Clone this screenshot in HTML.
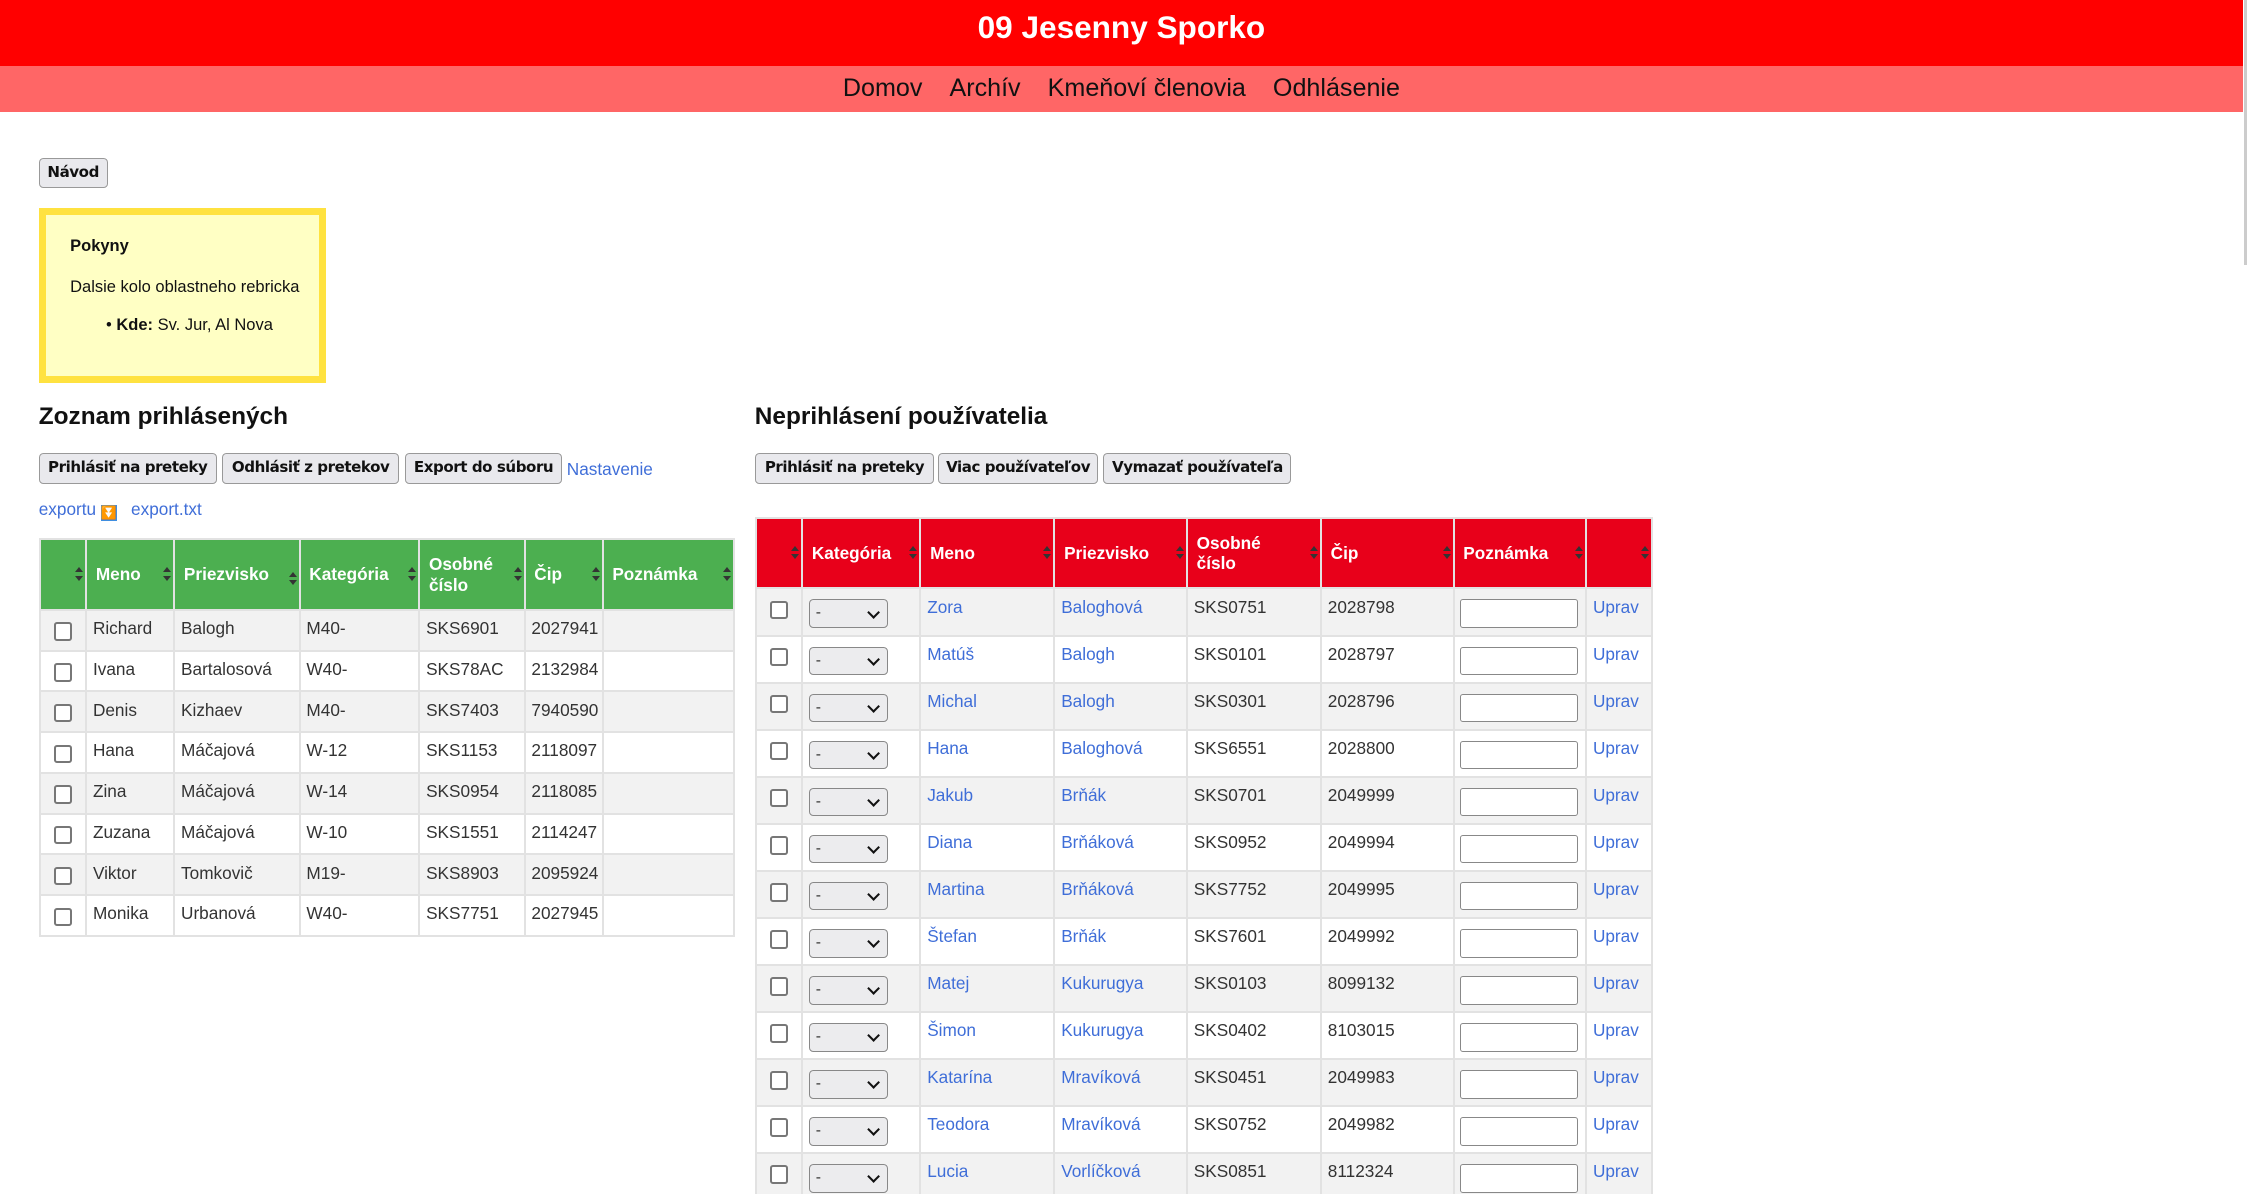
<!DOCTYPE html>
<html><head><meta charset="utf-8">
<style>
html,body{margin:0;padding:0;background:#fff;overflow:hidden}
#w{zoom:1.43495;width:1568px;height:832px;position:relative;font-family:"Liberation Sans",Arial,sans-serif;color:#222}
.hdr{position:absolute;left:0;top:0;width:1563px;height:46px;background:#ff0000;color:#fff;font-weight:bold;font-size:22px;text-align:center;line-height:39px}
.nav{position:absolute;left:0;top:46px;width:1563px;height:32px;background:#ff6666;text-align:center;font-size:17.5px;line-height:31px;color:#111}
.nav span{margin:0 7px}
.sb{position:absolute;left:1564px;top:0;width:2px;height:185px;background:#ccc}
.btn{position:absolute;height:21px;border:1px solid #999;border-radius:3px;background:#e9e9ed;font-family:"DejaVu Sans",sans-serif;font-weight:bold;font-size:10.5px;line-height:19px;box-sizing:border-box;white-space:nowrap;color:#111;letter-spacing:-0.3px;text-align:center;overflow:hidden}
.box{position:absolute;left:27px;top:145px;width:200px;height:122px;box-sizing:border-box;border:5px solid #ffe240;background:#ffffc4;font-size:11.5px;color:#111}
h2{position:absolute;margin:0;font-size:17px;font-weight:bold;color:#111}
a,.l{color:#3f6ed8;text-decoration:none}
table{position:absolute;border-collapse:separate;border-spacing:2px;background:#e2e2e2;font-size:12px;table-layout:fixed}
th{color:#fff;font-weight:bold;text-align:left;padding:0 6px;height:48px;position:relative;line-height:14px}
th i{position:absolute;right:4px;top:50%;margin-top:-5px;width:0;height:0;font-style:normal}
th i:before{content:"";position:absolute;left:-3px;top:0;border:3px solid transparent;border-bottom:4px solid #333;border-top:0}
th i:after{content:"";position:absolute;left:-3px;top:6px;border:3px solid transparent;border-top:4px solid #333;border-bottom:0}
td{vertical-align:top;padding:5px 4px 0;color:#333}
tr:nth-child(odd) td{background:#fff}
tr:nth-child(even) td{background:#f2f2f2}
.g th{background:#4caf50}
.r th{background:#e8001a}
.cb{display:inline-block;width:10px;height:10px;border:1.5px solid #777;border-radius:2px;background:#fff;margin:3px 0 0 5px}
.sel{display:inline-block;width:55px;height:20px;box-sizing:border-box;border:1px solid #888;border-radius:3px;background:#ececee;font-size:11px;line-height:18px;padding-left:4px;position:relative;margin-top:2px}
.sel:after{content:"";position:absolute;right:6px;top:5px;width:5px;height:5px;border-right:1.5px solid #111;border-bottom:1.5px solid #111;transform:rotate(45deg)}
.inp{display:inline-block;width:82px;height:20px;box-sizing:border-box;border:1px solid #888;border-radius:2px;background:#fff;margin-top:2px}
</style></head><body><div id="w">
<div class="hdr">09 Jesenny Sporko</div>
<div class="nav"><span>Domov</span> <span>Archív</span> <span>Kmeňoví členovia</span> <span>Odhlásenie</span></div>
<div class="sb"></div>
<div class="btn" style="left:27px;top:110px;width:48px">Návod</div>
<div class="box">
<div style="position:absolute;left:17px;top:15px;font-weight:bold">Pokyny</div>
<div style="position:absolute;left:17px;top:44px">Dalsie kolo oblastneho rebricka</div>
<div style="position:absolute;left:42px;top:70px">• <b>Kde:</b> Sv. Jur, Al Nova</div>
</div>
<h2 style="left:27px;top:281px">Zoznam prihlásených</h2>
<h2 style="left:526px;top:281px">Neprihlásení používatelia</h2>
<div class="btn" style="left:27px;top:316px;width:124px">Prihlásiť na preteky</div>
<div class="btn" style="left:155px;top:316px;width:123px">Odhlásiť z pretekov</div>
<div class="btn" style="left:282px;top:316px;width:110px">Export do súboru</div>
<span class="l" style="position:absolute;left:395px;top:320px;font-size:12px">Nastavenie</span>
<span class="l" style="position:absolute;left:27px;top:348px;font-size:12px">exportu <span style="display:inline-block;width:11px;height:11px;background:#3f8ee0;color:#fff;font-size:9px;line-height:11px;text-align:center;vertical-align:-1px">⏬</span>&nbsp;&nbsp; export.txt</span>
<div class="btn" style="left:526px;top:316px;width:125px">Prihlásiť na preteky</div>
<div class="btn" style="left:654px;top:316px;width:111px">Viac používateľov</div>
<div class="btn" style="left:769px;top:316px;width:131px">Vymazať používateľa</div>

<table class="g" style="left:27px;top:375px;width:485px">
<colgroup><col style="width:31px"><col style="width:60px"><col style="width:86px"><col style="width:82px"><col style="width:72px"><col style="width:53px"><col></colgroup>
<tr><th><i></i></th><th>Meno<i></i></th><th>Priezvisko<i style="margin-top:-2px"></i></th><th>Kategória<i></i></th><th>Osobné<br>číslo<i></i></th><th>Čip<i></i></th><th>Poznámka<i></i></th></tr>
<tr style="height:27px"><td><span class="cb"></span></td><td>Richard</td><td>Balogh</td><td>M40-</td><td>SKS6901</td><td>2027941</td><td></td></tr>
<tr style="height:27px"><td><span class="cb"></span></td><td>Ivana</td><td>Bartalosová</td><td>W40-</td><td>SKS78AC</td><td>2132984</td><td></td></tr>
<tr style="height:27px"><td><span class="cb"></span></td><td>Denis</td><td>Kizhaev</td><td>M40-</td><td>SKS7403</td><td>7940590</td><td></td></tr>
<tr style="height:27px"><td><span class="cb"></span></td><td>Hana</td><td>Máčajová</td><td>W-12</td><td>SKS1153</td><td>2118097</td><td></td></tr>
<tr style="height:27px"><td><span class="cb"></span></td><td>Zina</td><td>Máčajová</td><td>W-14</td><td>SKS0954</td><td>2118085</td><td></td></tr>
<tr style="height:27px"><td><span class="cb"></span></td><td>Zuzana</td><td>Máčajová</td><td>W-10</td><td>SKS1551</td><td>2114247</td><td></td></tr>
<tr style="height:27px"><td><span class="cb"></span></td><td>Viktor</td><td>Tomkovič</td><td>M19-</td><td>SKS8903</td><td>2095924</td><td></td></tr>
<tr style="height:27px"><td><span class="cb"></span></td><td>Monika</td><td>Urbanová</td><td>W40-</td><td>SKS7751</td><td>2027945</td><td></td></tr>
</table>

<table class="r" style="left:526px;top:360px;width:626px">
<colgroup><col style="width:31px"><col style="width:81px"><col style="width:92px"><col style="width:91px"><col style="width:92px"><col style="width:91px"><col style="width:91px"><col></colgroup>
<tr><th><i></i></th><th>Kategória<i></i></th><th>Meno<i></i></th><th>Priezvisko<i></i></th><th>Osobné<br>číslo<i></i></th><th>Čip<i></i></th><th>Poznámka<i></i></th><th><i></i></th></tr>
<tr style="height:31.4px"><td><span class="cb"></span></td><td><span class="sel">-</span></td><td><a>Zora</a></td><td><a>Baloghová</a></td><td>SKS0751</td><td>2028798</td><td><span class="inp"></span></td><td><a>Uprav</a></td></tr>
<tr style="height:31.4px"><td><span class="cb"></span></td><td><span class="sel">-</span></td><td><a>Matúš</a></td><td><a>Balogh</a></td><td>SKS0101</td><td>2028797</td><td><span class="inp"></span></td><td><a>Uprav</a></td></tr>
<tr style="height:31.4px"><td><span class="cb"></span></td><td><span class="sel">-</span></td><td><a>Michal</a></td><td><a>Balogh</a></td><td>SKS0301</td><td>2028796</td><td><span class="inp"></span></td><td><a>Uprav</a></td></tr>
<tr style="height:31.4px"><td><span class="cb"></span></td><td><span class="sel">-</span></td><td><a>Hana</a></td><td><a>Baloghová</a></td><td>SKS6551</td><td>2028800</td><td><span class="inp"></span></td><td><a>Uprav</a></td></tr>
<tr style="height:31.4px"><td><span class="cb"></span></td><td><span class="sel">-</span></td><td><a>Jakub</a></td><td><a>Brňák</a></td><td>SKS0701</td><td>2049999</td><td><span class="inp"></span></td><td><a>Uprav</a></td></tr>
<tr style="height:31.4px"><td><span class="cb"></span></td><td><span class="sel">-</span></td><td><a>Diana</a></td><td><a>Brňáková</a></td><td>SKS0952</td><td>2049994</td><td><span class="inp"></span></td><td><a>Uprav</a></td></tr>
<tr style="height:31.4px"><td><span class="cb"></span></td><td><span class="sel">-</span></td><td><a>Martina</a></td><td><a>Brňáková</a></td><td>SKS7752</td><td>2049995</td><td><span class="inp"></span></td><td><a>Uprav</a></td></tr>
<tr style="height:31.4px"><td><span class="cb"></span></td><td><span class="sel">-</span></td><td><a>Štefan</a></td><td><a>Brňák</a></td><td>SKS7601</td><td>2049992</td><td><span class="inp"></span></td><td><a>Uprav</a></td></tr>
<tr style="height:31.4px"><td><span class="cb"></span></td><td><span class="sel">-</span></td><td><a>Matej</a></td><td><a>Kukurugya</a></td><td>SKS0103</td><td>8099132</td><td><span class="inp"></span></td><td><a>Uprav</a></td></tr>
<tr style="height:31.4px"><td><span class="cb"></span></td><td><span class="sel">-</span></td><td><a>Šimon</a></td><td><a>Kukurugya</a></td><td>SKS0402</td><td>8103015</td><td><span class="inp"></span></td><td><a>Uprav</a></td></tr>
<tr style="height:31.4px"><td><span class="cb"></span></td><td><span class="sel">-</span></td><td><a>Katarína</a></td><td><a>Mravíková</a></td><td>SKS0451</td><td>2049983</td><td><span class="inp"></span></td><td><a>Uprav</a></td></tr>
<tr style="height:31.4px"><td><span class="cb"></span></td><td><span class="sel">-</span></td><td><a>Teodora</a></td><td><a>Mravíková</a></td><td>SKS0752</td><td>2049982</td><td><span class="inp"></span></td><td><a>Uprav</a></td></tr>
<tr style="height:31.4px"><td><span class="cb"></span></td><td><span class="sel">-</span></td><td><a>Lucia</a></td><td><a>Vorlíčková</a></td><td>SKS0851</td><td>8112324</td><td><span class="inp"></span></td><td><a>Uprav</a></td></tr>
</table>
</div></body></html>
